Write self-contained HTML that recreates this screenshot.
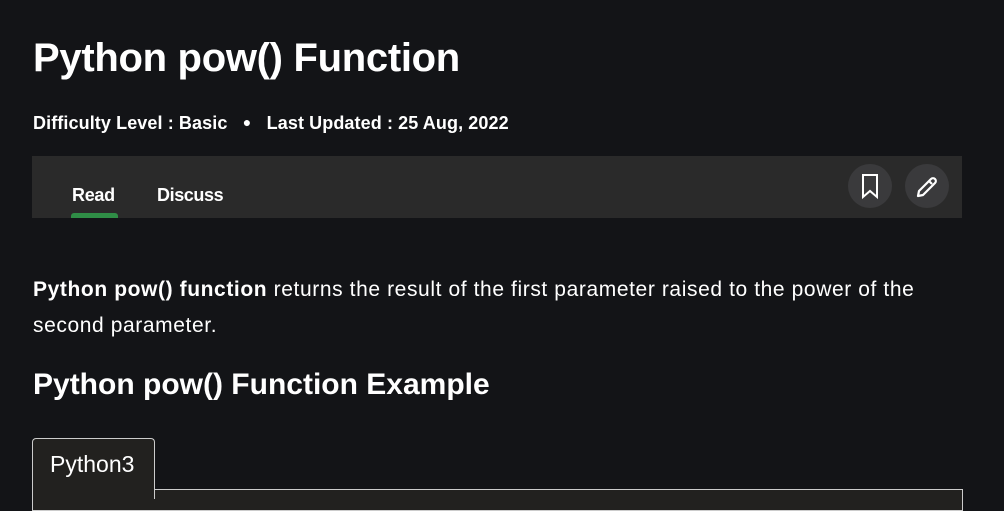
<!DOCTYPE html>
<html><head><style>
body{margin:0;background:#131417;width:1004px;height:499px;overflow:hidden;font-family:"Liberation Sans",sans-serif;color:#fff;position:relative}
.a{position:absolute;white-space:nowrap}
</style></head><body>
<div class="a" style="left:33px;top:36px;font-size:40px;font-weight:bold;letter-spacing:-0.3px">Python pow() Function</div>
<div class="a" style="left:33px;top:113px;font-size:18px;font-weight:bold;letter-spacing:0.1px">Difficulty Level : Basic &nbsp;&nbsp;<span style="font-size:14px;position:relative;top:-2px">●</span>&nbsp;&nbsp; Last Updated : 25 Aug, 2022</div>
<div class="a" style="left:32px;top:156px;width:930px;height:62px;background:#2a2a2a"></div>
<div class="a" style="left:72px;top:185px;font-size:18px;font-weight:bold;letter-spacing:-0.3px">Read</div>
<div class="a" style="left:71px;top:213px;width:47px;height:5px;background:#2f8d46;border-radius:3px 3px 0 0"></div>
<div class="a" style="left:157px;top:185px;font-size:18px;font-weight:bold;letter-spacing:-0.4px">Discuss</div>
<div class="a" style="left:848px;top:164px;width:44px;height:44px;border-radius:50%;background:#3a3a3c"></div>
<div class="a" style="left:905px;top:164px;width:44px;height:44px;border-radius:50%;background:#3a3a3c"></div>
<svg class="a" style="left:848px;top:164px" width="44" height="44"><path d="M15 11h14v22l-7-6-7 6z" fill="none" stroke="#fff" stroke-width="2"/></svg>
<svg class="a" style="left:905px;top:164px" width="44" height="44"><path d="M13 32l1-5 12-12a2 2 0 0 1 4 4l-12 12zM24 17l3 3" fill="none" stroke="#fff" stroke-width="2.2" stroke-linejoin="round"/></svg>
<div class="a" style="left:33px;top:272px;font-size:21px;line-height:36px;white-space:normal;width:910px;letter-spacing:0.6px"><b>Python pow() function</b> returns the result of the first parameter raised to the power of the second parameter.</div>
<div class="a" style="left:33px;top:368px;font-size:30px;font-weight:bold">Python pow() Function Example</div>
<div class="a" style="left:32px;top:489px;width:929px;height:20px;background:#22211f;border:1px solid #ccc"></div>
<div class="a" style="left:32px;top:438px;width:121px;height:60px;background:#22211f;border:1px solid #ccc;border-bottom:none;border-radius:4px 4px 0 0"></div>
<div class="a" style="left:50px;top:451px;font-size:23px">Python3</div>
</body></html>
